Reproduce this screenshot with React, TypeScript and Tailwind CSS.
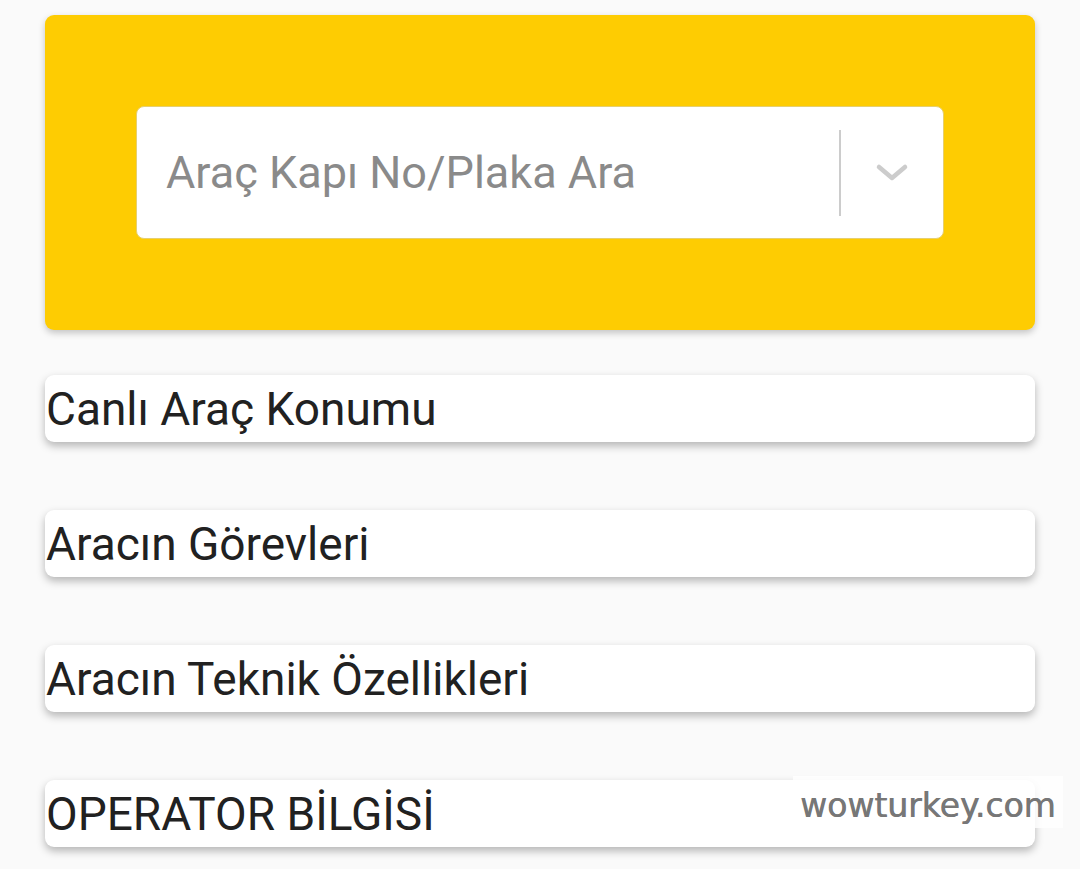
import React from "react";

const items = ["Canlı Araç Konumu", "Aracın Görevleri", "Aracın Teknik Özellikleri", "OPERATOR BİLGİSİ"];

export default function App() {
  return (
    <div className="relative min-h-[869px] w-[1080px] bg-[#fafafa] pt-[15px] px-[45px]" style={{ fontFamily: "Roboto, 'Noto Sans', sans-serif" }}>
      <div className="flex h-[315px] w-[990px] items-start rounded-[9px] bg-[#fecc02] pt-[91px] pl-[91px] shadow-[0_3px_7px_rgba(0,0,0,0.22)]">
        <div className="flex h-[133px] w-[808px] items-center rounded-[8px] border border-[#e6cf70] bg-white">
          <div className="flex-1 pl-[29px] text-[45px] leading-none text-[#8a8a8a]">Araç Kapı No/Plaka Ara</div>
          <div className="h-[86px] w-[2px] bg-[#cccccc]" />
          <div className="flex w-[102px] items-center justify-center">
            <svg width="34" height="20" viewBox="0 0 34 20">
              <path d="M4 4 L17 15 L30 4" fill="none" stroke="#cccccc" strokeWidth="4.5" strokeLinecap="round" strokeLinejoin="round" />
            </svg>
          </div>
        </div>
      </div>
      <div className="mt-[45px] flex flex-col gap-[68px]">
        {items.map((t) => (
          <div key={t} className="flex h-[67px] w-[990px] items-center rounded-[9px] bg-white pl-[1px] text-[46px] leading-none text-[#212121] shadow-[0_4px_8px_rgba(0,0,0,0.28)]">
            {t}
          </div>
        ))}
      </div>
      <div className="absolute left-[793px] top-[776px] bg-white/80 px-[7px] pt-[13px] pb-[6px] text-[33px] leading-none text-[#777777] [text-shadow:0.6px_0_0_#777777]" style={{ fontFamily: "'DejaVu Sans', Verdana, sans-serif" }}>
        wowturkey.com
      </div>
    </div>
  );
}
